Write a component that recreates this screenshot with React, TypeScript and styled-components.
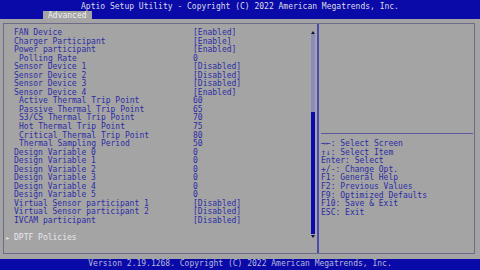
import React from "react";
import styled, { createGlobalStyle } from "styled-components";

const Global = createGlobalStyle`
  html, body { margin: 0; padding: 0; background: #a4a4a4; }
  body { width: 480px; height: 270px; overflow: hidden; }
  * { box-sizing: border-box; }
`;

const Screen = styled.div`
  width: 480px;
  height: 270px;
  display: flex;
  flex-direction: column;
  font-family: "DejaVu Sans Mono", "Liberation Mono", monospace;
  font-size: 8px;
  background: #a4a4a4;
  color: #2c2ca4;
`;

const TopBar = styled.div`
  height: 19px;
  background: #0a0aa8;
  display: flex;
  flex-direction: column;
`;

const Title = styled.div`
  height: 11px;
  line-height: 13px;
  text-align: center;
  color: #dcdce8;
`;

const TabRow = styled.div`
  height: 8px;
  display: flex;
  padding-left: 43px;
`;

const Tab = styled.div`
  background: #a4a4a4;
  color: #f2f2f2;
  height: 8px;
  line-height: 9px;
  padding: 0 5px;
`;

const Body = styled.div`
  flex: 1;
  padding: 4px 5px 5px 3px;
  display: flex;
`;

const Frame = styled.div`
  flex: 1;
  border: 1px solid #6c6c88;
  display: flex;
`;

const ListCol = styled.div`
  flex: 1;
  padding: 5px 0 0 0;
  display: flex;
`;

const List = styled.div`
  flex: 1;
  display: flex;
  flex-direction: column;
`;

const Row = styled.div<{ $indent?: boolean }>`
  display: grid;
  grid-template-columns: ${(p) => (p.$indent ? "174px" : "179px")} 1fr;
  height: 8.55px;
  line-height: 8.55px;
  padding-left: ${(p) => (p.$indent ? "15px" : "10px")};
  white-space: pre;
`;

const Spacer = styled.div`
  height: 8.55px;
`;

const SubMenu = styled.div`
  height: 8.55px;
  line-height: 8.55px;
  color: #e8e8f0;
  display: flex;
  padding-left: 1px;
`;

const Pointer = styled.span`
  width: 9px;
  font-size: 6px;
  padding-left: 1px;
`;

const ScrollCol = styled.div`
  width: 5px;
  margin-right: 1px;
  padding-top: 6px;
  display: flex;
  flex-direction: column;
  align-items: center;
`;

const Arrow = styled.div`
  height: 4px;
  width: 5px;
  display: flex;
  justify-content: center;
  align-items: center;
`;

const Track = styled.div`
  width: 4px;
  height: 200px;
  background: #8c8cbc;
  display: flex;
  flex-direction: column;
  justify-content: flex-end;
`;

const Thumb = styled.div`
  width: 4px;
  height: 122px;
  background: #0c0cae;
`;

const Divider = styled.div`
  width: 2px;
  margin-left: 1px;
  background: #4c4cb0;
`;

const HelpCol = styled.div`
  width: 155px;
  display: flex;
  flex-direction: column;
`;

const HelpTop = styled.div`
  height: 110px;
  border-bottom: 1px solid #5a5a9a;
  margin: 0 1px 0 2px;
`;

const HelpList = styled.div`
  padding: 6px 0 0 2px;
  display: flex;
  flex-direction: column;
`;

const HelpLine = styled.div`
  height: 8.6px;
  line-height: 8.6px;
  white-space: pre;
`;

const BottomBar = styled.div`
  height: 11px;
  background: #0a0aa8;
  color: #b8b8d8;
  text-align: center;
  line-height: 10px;
`;

type Item = { label: string; value: string; indent?: boolean };

const items: Item[] = [
  { label: "FAN Device", value: "[Enabled]" },
  { label: "Charger Participant", value: "[Enable]" },
  { label: "Power participant", value: "[Enabled]" },
  { label: "Polling Rate", value: "0", indent: true },
  { label: "Sensor Device 1", value: "[Disabled]" },
  { label: "Sensor Device 2", value: "[Disabled]" },
  { label: "Sensor Device 3", value: "[Disabled]" },
  { label: "Sensor Device 4", value: "[Enabled]" },
  { label: "Active Thermal Trip Point", value: "60", indent: true },
  { label: "Passive Thermal Trip Point", value: "65", indent: true },
  { label: "S3/CS Thermal Trip Point", value: "70", indent: true },
  { label: "Hot Thermal Trip Point", value: "75", indent: true },
  { label: "Critical Thermal Trip Point", value: "80", indent: true },
  { label: "Thermal Sampling Period", value: "50", indent: true },
  { label: "Design Variable 0", value: "0" },
  { label: "Design Variable 1", value: "0" },
  { label: "Design Variable 2", value: "0" },
  { label: "Design Variable 3", value: "0" },
  { label: "Design Variable 4", value: "0" },
  { label: "Design Variable 5", value: "0" },
  { label: "Virtual Sensor participant 1", value: "[Disabled]" },
  { label: "Virtual Sensor participant 2", value: "[Disabled]" },
  { label: "IVCAM participant", value: "[Disabled]" },
];

const help = [
  "→←: Select Screen",
  "↑↓: Select Item",
  "Enter: Select",
  "+/-: Change Opt.",
  "F1: General Help",
  "F2: Previous Values",
  "F9: Optimized Defaults",
  "F10: Save & Exit",
  "ESC: Exit",
];

const Tri = ({ up }: { up?: boolean }) => (
  <svg width="4" height="3" viewBox="0 0 4 3">
    <polygon points={up ? "0,3 4,3 2,0" : "0,0 4,0 2,3"} fill="#101040" />
  </svg>
);

export default function App() {
  return (
    <Screen>
      <Global />
      <TopBar>
        <Title>Aptio Setup Utility - Copyright (C) 2022 American Megatrends, Inc.</Title>
        <TabRow>
          <Tab>Advanced</Tab>
        </TabRow>
      </TopBar>
      <Body>
        <Frame>
          <ListCol>
            <List>
              {items.map((it) => (
                <Row key={it.label} $indent={it.indent}>
                  <span>{it.label}</span>
                  <span>{it.value}</span>
                </Row>
              ))}
              <Spacer />
              <SubMenu>
                <Pointer>►</Pointer>
                <span>DPTF Policies</span>
              </SubMenu>
            </List>
          </ListCol>
          <ScrollCol>
            <Arrow>
              <Tri up />
            </Arrow>
            <Track>
              <Thumb />
            </Track>
            <Arrow>
              <Tri />
            </Arrow>
          </ScrollCol>
          <Divider />
          <HelpCol>
            <HelpTop />
            <HelpList>
              {help.map((h) => (
                <HelpLine key={h}>{h}</HelpLine>
              ))}
            </HelpList>
          </HelpCol>
        </Frame>
      </Body>
      <BottomBar>Version 2.19.1268. Copyright (C) 2022 American Megatrends, Inc.</BottomBar>
    </Screen>
  );
}
